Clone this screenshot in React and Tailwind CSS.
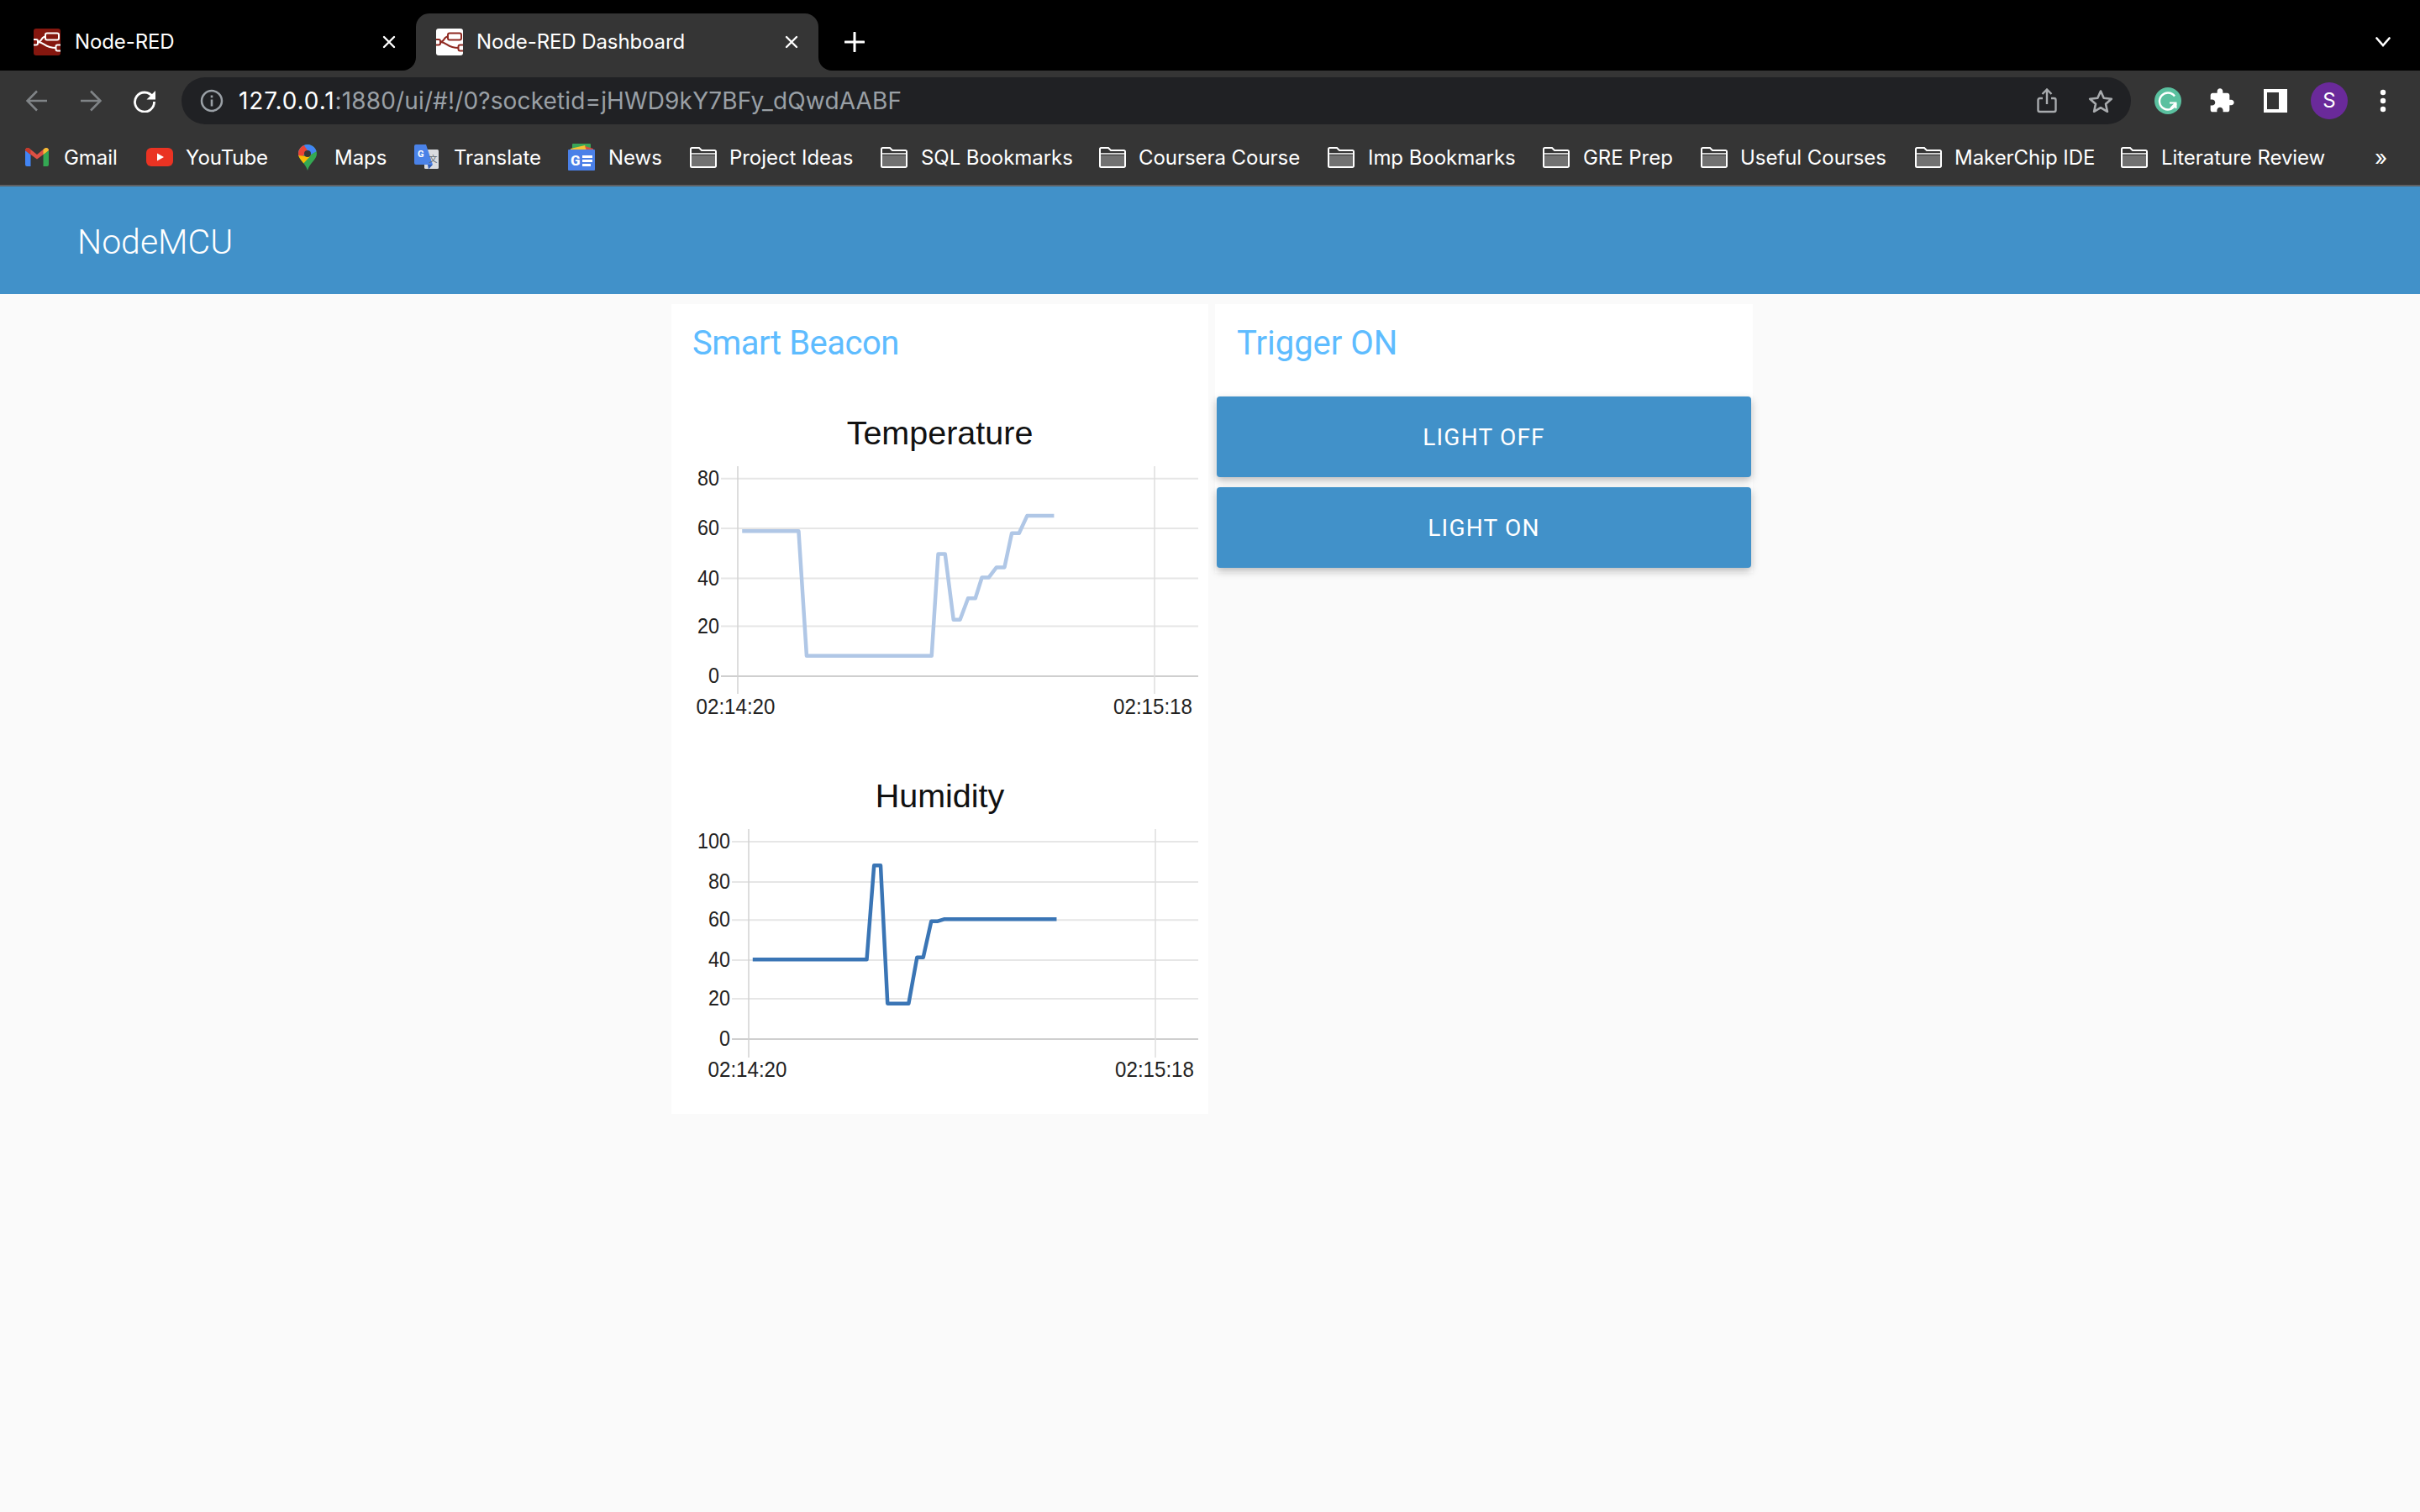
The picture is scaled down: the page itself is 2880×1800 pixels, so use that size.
import React from "react";

const Ui = "font-['Inter','Roboto',sans-serif]";

function NodeRedIcon({ bg, fg }) {
  return (
    <svg width="32" height="32" viewBox="0 0 32 32" className="shrink-0">
      <rect width="32" height="32" rx="3" fill={bg} />
      <g fill="none" stroke={fg} strokeWidth="2">
        <rect x="14" y="5.5" width="16" height="8" rx="2" />
        <rect x="26.5" y="19.5" width="8" height="7" rx="2" />
        <rect x="-3" y="13" width="8" height="6.5" rx="2" />
        <path d="M5 16 C10 16 9 9.5 14 9.5" />
        <path d="M5 16 C13 16 13 23 26.5 23" />
      </g>
    </svg>
  );
}

function X() {
  return (
    <svg width="16" height="16" viewBox="0 0 16 16">
      <path d="M2 2 L14 14 M14 2 L2 14" stroke="#fff" strokeWidth="2.4" strokeLinecap="round" />
    </svg>
  );
}

function Gmail() {
  return (
    <svg width="28" height="22" viewBox="0 0 28 22">
      <path d="M0 3 V20 a2 2 0 0 0 2 2 H6.5 V8 Z" fill="#4285f4" />
      <path d="M21.5 8 V22 H26 a2 2 0 0 0 2-2 V3 Z" fill="#34a853" />
      <path d="M0 3 a3 3 0 0 1 5-2.2 L14 8 L23 .8 a3 3 0 0 1 5 2.2 L21.5 8 L14 13.5 L6.5 8 Z" fill="#dd5044" />
      <path d="M0 3 a3 3 0 0 1 5-2.2 L6.5 2 V8 Z" fill="#c5392c" />
      <path d="M28 3 a3 3 0 0 0-5-2.2 L21.5 2 V8 Z" fill="#f2bd33" />
    </svg>
  );
}

function YouTube() {
  return (
    <svg width="32" height="22" viewBox="0 0 32 22">
      <rect width="32" height="22" rx="6" fill="#ea3323" />
      <path d="M13 6.5 L21 11 L13 15.5 Z" fill="#fff" />
    </svg>
  );
}

function Maps() {
  return (
    <svg width="22" height="31" viewBox="0 0 22 31">
      <defs>
        <clipPath id="pin">
          <path d="M11 0 C5 0 0 5 0 11 C0 18 8.500 22 11 31 C13.500 22 22 18 22 11 C22 5 17 0 11 0 Z" />
        </clipPath>
      </defs>
      <g clipPath="url(#pin)">
        <rect width="22" height="31" fill="#34a853" />
        <path d="M0 0 H22 V8 L13 13 H0 Z" fill="#4285f4" />
        <path d="M0 4 L6 0 L11 7 L4 16 L0 14 Z" fill="#ea4335" />
        <path d="M0 13 L8 14 L15 13 L3 26 L0 20 Z" fill="#fbbc04" />
      </g>
      <circle cx="11" cy="11" r="4" fill="#353535" />
    </svg>
  );
}

function Translate() {
  return (
    <svg width="30" height="30" viewBox="0 0 30 30">
      <rect x="12" y="6" width="17" height="23" rx="1.500" fill="#dadce0" />
      <path d="M2 0 H14 L22 24 H2 a2 2 0 0 1-2-2 V2 a2 2 0 0 1 2-2 Z" fill="#4a82e8" />
      <path d="M16 24 H22 L17 29.500 Z" fill="#2f5cb5" />
      <text x="4" y="15" fontSize="11" fontWeight="700" fill="#fff" fontFamily="Roboto, sans-serif">G</text>
      <text x="17.500" y="21" fontSize="10" fill="#5f6a73" fontFamily="'Noto Sans CJK SC', sans-serif">文</text>
    </svg>
  );
}

function News() {
  return (
    <svg width="32" height="32" viewBox="0 0 32 32">
      <rect x="5" y="0" width="22" height="6" rx="1" fill="#3aa757" />
      <path d="M3 6 L20 2 L24 8 H3 Z" fill="#f5c233" />
      <path d="M20 3 L30 6 V8 H22 Z" fill="#d9503f" />
      <rect y="7" width="32" height="25" rx="1" fill="#4a80e8" />
      <text x="3" y="26" fontSize="17" fontWeight="800" fill="#fff" fontFamily="Roboto, sans-serif">G</text>
      <rect x="17" y="14" width="12" height="3" fill="#fff" />
      <rect x="17" y="19" width="12" height="3" fill="#fff" />
      <rect x="17" y="24" width="10" height="3" fill="#fff" />
    </svg>
  );
}

function Folder() {
  return (
    <svg width="32" height="25" viewBox="0 0 32 25">
      <rect x="2" y="10" width="28" height="13" fill="#717171" />
      <path
        d="M2.500 1 H11 L14 4 H29.500 a1.500 1.500 0 0 1 1.500 1.500 V22.500 a1.500 1.500 0 0 1-1.500 1.500 H2.500 a1.500 1.500 0 0 1-1.500-1.500 V2.500 a1.500 1.500 0 0 1 1.500-1.500 Z"
        fill="none"
        stroke="#fff"
        strokeWidth="2"
      />
      <path d="M1 8 H31" stroke="#fff" strokeWidth="1.500" />
    </svg>
  );
}

const bookmarks = [
  { label: "Gmail", w: "w-[144px]", box: "w-[46px]", icon: <Gmail /> },
  { label: "YouTube", w: "w-[181px]", box: "w-[47px]", icon: <YouTube /> },
  { label: "Maps", w: "w-[138px]", box: "w-[43px]", icon: <Maps /> },
  { label: "Translate", w: "w-[183px]", box: "w-[47px]", icon: <Translate /> },
  { label: "News", w: "w-[145px]", box: "w-[48px]", icon: <News /> },
  { label: "Project Ideas", w: "w-[227px]", box: "w-[47px]", icon: <Folder /> },
  { label: "SQL Bookmarks", w: "w-[260px]", box: "w-[48px]", icon: <Folder /> },
  { label: "Coursera Course", w: "w-[272px]", box: "w-[47px]", icon: <Folder /> },
  { label: "Imp Bookmarks", w: "w-[256px]", box: "w-[48px]", icon: <Folder /> },
  { label: "GRE Prep", w: "w-[188px]", box: "w-[48px]", icon: <Folder /> },
  { label: "Useful Courses", w: "w-[255px]", box: "w-[47px]", icon: <Folder /> },
  { label: "MakerChip IDE", w: "w-[245px]", box: "w-[47px]", icon: <Folder /> },
  { label: "Literature Review", w: "w-[303px]", box: "w-[48px]", icon: <Folder /> },
];

function AxisText({ x, y, anchor, sx, children }) {
  return (
    <text
      transform={`translate(${x} ${y}) scale(${sx} 1)`}
      textAnchor={anchor}
      fontSize="26.5"
      fill="#222"
      fontFamily="'Liberation Sans', sans-serif"
    >
      {children}
    </text>
  );
}

function Chart({ rows, xL, xR, vL, vR, yTop, yBot, pts, color, time, right }) {
  const polyline = pts.map((p) => p.join(",")).join(" ");
  return (
    <svg width="639" height="320" viewBox="0 0 639 320" className="block -ml-px">
      {rows.map(([label, y], i) => (
        <g key={label}>
          <line x1={xL} x2="628" y1={y} y2={y} stroke={i === rows.length - 1 ? "#cfcfcf" : "#e6e6e6"} strokeWidth="2" />
          <AxisText x={right} y={y + 8} anchor="end" sx={0.88}>
            {label}
          </AxisText>
        </g>
      ))}
      <line x1={vL} x2={vL} y1={yTop} y2={yBot} stroke="#d2d2d2" strokeWidth="1.500" />
      <line x1={vR} x2={vR} y1={yTop} y2={yBot} stroke="#dedede" strokeWidth="1.500" />
      <polyline points={polyline} fill="none" stroke={color} strokeWidth="4.500" strokeLinejoin="round" />
      <AxisText x={xR[0]} y={time} anchor="middle" sx={0.91}>02:14:20</AxisText>
      <AxisText x={xR[1]} y={time} anchor="middle" sx={0.91}>02:15:18</AxisText>
    </svg>
  );
}

const tempPts = [
  [238, 849], [393, 849], [415, 1280], [758, 1280], [776, 928], [795, 928], [818, 1155], [836, 1155], [858, 1081],
  [878, 1081], [896, 1009], [915, 1009], [936, 974], [958, 974], [978, 856], [998, 856], [1020, 796], [1094, 796],
].map(([x, y]) => [x / 2.306 - 18, y / 2.904 - 204]);

const humPts = [
  [267, 787], [580, 787], [600, 451], [618, 451], [637, 944], [695, 944], [718, 779], [735, 779], [757, 650],
  [775, 650], [792, 643], [1101, 643],
].map(([x, y]) => [x / 2.306 - 18, y / 3 - 96]);

function Button({ children }) {
  return (
    <div className="h-[96px] pt-[1px] rounded-[4px] bg-[#4191c9] flex items-center justify-center text-white text-[28px] tracking-[1.2px] font-['Roboto',sans-serif] shadow-[0_4px_10px_rgba(0,0,0,0.28)]">
      {children}
    </div>
  );
}

export default function App() {
  return (
    <div className={`w-[2880px] h-[1800px] overflow-hidden flex flex-col bg-[#fafafa] ${Ui}`}>
      {/* Tab strip */}
      <div className="h-[84px] bg-black flex items-end text-white text-[24px]">
        <div className="w-[495px] h-[68px] flex items-center pl-[40px] pr-[24px]">
          <NodeRedIcon bg="#85170f" fg="#fff" />
          <span className="ml-[17px] flex-1 tracking-[-0.1px]">Node-RED</span>
          <X />
        </div>
        <div className="relative w-[479px] h-[68px] bg-[#353535] rounded-t-[16px] flex items-center pl-[24px] pr-[24px]">
          <div className="absolute left-[-16px] bottom-0 w-[16px] h-[16px] bg-[#353535]">
            <div className="w-full h-full bg-black rounded-br-[16px]" />
          </div>
          <div className="absolute right-[-16px] bottom-0 w-[16px] h-[16px] bg-[#353535]">
            <div className="w-full h-full bg-black rounded-bl-[16px]" />
          </div>
          <NodeRedIcon bg="#fff" fg="#8f2a22" />
          <span className="ml-[16px] flex-1 tracking-[-0.1px]">Node-RED Dashboard</span>
          <X />
        </div>
        <div className="h-[68px] flex items-center ml-[31px]">
          <svg width="24" height="24" viewBox="0 0 24 24">
            <path d="M12 1 V23 M1 12 H23" stroke="#fff" strokeWidth="3" strokeLinecap="round" />
          </svg>
        </div>
        <div className="h-[68px] flex items-center ml-auto mr-[35px]">
          <svg width="18" height="12" viewBox="0 0 18 12">
            <path d="M1.500 1.500 L9 10 L16.500 1.500" fill="none" stroke="#fff" strokeWidth="2.600" strokeLinecap="round" />
          </svg>
        </div>
      </div>

      {/* Toolbar */}
      <div className="h-[64px] bg-[#353535] flex pt-[8px] pl-[12px] pr-[12px]">
        <div className="w-[64px] h-[56px] flex items-center justify-center">
          <svg width="26" height="26" viewBox="0 0 26 26">
            <path d="M25 13 H2 M13 1.500 L1.500 13 L13 24.500" fill="none" stroke="#808487" strokeWidth="2.600" />
          </svg>
        </div>
        <div className="w-[64px] h-[56px] flex items-center justify-center">
          <svg width="26" height="26" viewBox="0 0 26 26">
            <path d="M1 13 H24 M13 1.500 L24.500 13 L13 24.500" fill="none" stroke="#808487" strokeWidth="2.600" />
          </svg>
        </div>
        <div className="w-[64px] h-[56px] flex items-center justify-center">
          <svg width="28" height="28" viewBox="0 0 28 28">
            <path d="M23.500 9 A11.500 11.500 0 1 0 25.500 15" fill="none" stroke="#fff" strokeWidth="2.800" />
            <path d="M27 2 V12.500 H16.500 Z" fill="#fff" />
          </svg>
        </div>
        <div className="flex-1 mx-[12px] h-[56px] rounded-full bg-[#202124] flex items-center pl-[16px] pr-[4px]">
          <div className="w-[40px] flex justify-center">
            <svg width="28" height="28" viewBox="0 0 28 28">
              <circle cx="14" cy="14" r="12" fill="none" stroke="#9aa0a6" strokeWidth="2.500" />
              <rect x="12.700" y="12.500" width="2.600" height="8" fill="#9aa0a6" />
              <rect x="12.700" y="7.500" width="2.600" height="2.800" fill="#9aa0a6" />
            </svg>
          </div>
          <div className="ml-[12px] flex-1 text-[28px] text-[#9aa0a6] tracking-[0.14px]">
            <span className="text-white tracking-[0.9px]">127.0.0.1</span>:1880/ui/#!/0?socketid=jHWD9kY7BFy_dQwdAABF
          </div>
          <div className="w-[64px] flex justify-center">
            <svg width="24" height="30" viewBox="0 0 24 30">
              <path d="M7 12 H3.500 a2 2 0 0 0-2 2 V26 a2 2 0 0 0 2 2 H20.500 a2 2 0 0 0 2-2 V14 a2 2 0 0 0-2-2 H17" fill="none" stroke="#a8abae" strokeWidth="2.400" />
              <path d="M12 19 V2 M6.500 7 L12 1.500 L17.500 7" fill="none" stroke="#a8abae" strokeWidth="2.400" />
            </svg>
          </div>
          <div className="w-[64px] flex justify-center">
            <svg width="30" height="28" viewBox="0 0 30 28">
              <path d="M15 2.500 L18.700 10.800 L27.800 11.700 L21 17.800 L22.900 26.800 L15 22.200 L7.100 26.800 L9 17.800 L2.200 11.700 L11.300 10.800 Z" fill="none" stroke="#a8abae" strokeWidth="2.600" strokeLinejoin="round" />
            </svg>
          </div>
        </div>
        <div className="w-[64px] h-[56px] flex items-center justify-center">
          <svg width="32" height="32" viewBox="0 0 32 32">
            <circle cx="16" cy="16" r="16" fill="#5ac09f" />
            <path d="M24 10.500 A10 10 0 1 0 25.500 19.500" fill="none" stroke="#fff" strokeWidth="2.400" />
            <path d="M18 18.500 H25.500 V25 M25.500 18.500 L19 25" fill="none" stroke="#fff" strokeWidth="2" />
          </svg>
        </div>
        <div className="w-[64px] h-[56px] flex items-center justify-center">
          <svg width="32" height="32" viewBox="0 0 24 24">
            <path
              fill="#fff"
              d="M20.500 11H19V7c0-1.100-.9-2-2-2h-4V3.500C13 2.120 11.880 1 10.500 1S8 2.120 8 3.500V5H4c-1.100 0-1.990.9-1.990 2v3.800H3.500c1.490 0 2.700 1.210 2.700 2.700s-1.210 2.700-2.700 2.700H2V20c0 1.100.9 2 2 2h3.800v-1.500c0-1.490 1.210-2.700 2.700-2.700 1.490 0 2.700 1.210 2.700 2.700V22H17c1.100 0 2-.9 2-2v-4h1.500c1.380 0 2.500-1.120 2.500-2.500S21.880 11 20.500 11z"
            />
          </svg>
        </div>
        <div className="w-[64px] h-[56px] flex items-center justify-center">
          <svg width="28" height="28" viewBox="0 0 28 28">
            <rect width="28" height="28" fill="#fff" />
            <rect x="4" y="4" width="14" height="20" fill="#353535" />
          </svg>
        </div>
        <div className="w-[64px] h-[56px] flex items-center justify-center">
          <div className="w-[44px] h-[44px] rounded-full bg-[#6a2a9a] flex items-center justify-center text-white text-[24px]">S</div>
        </div>
        <div className="w-[64px] h-[56px] flex items-center justify-center">
          <svg width="8" height="28" viewBox="0 0 8 28">
            <circle cx="4" cy="4" r="3.200" fill="#fff" />
            <circle cx="4" cy="14" r="3.200" fill="#fff" />
            <circle cx="4" cy="24" r="3.200" fill="#fff" />
          </svg>
        </div>
      </div>

      {/* Bookmarks */}
      <div className="h-[74px] bg-[#353535] border-b-2 border-[#5f6063] flex items-center pt-[6px] pl-[30px] text-white text-[24px] tracking-[-0.05px]">
        {bookmarks.map((b) => (
          <div key={b.label} className={`${b.w} flex items-center shrink-0`}>
            <div className={`${b.box} shrink-0 flex items-center`}>{b.icon}</div>
            <span className="whitespace-nowrap pt-[2px]">{b.label}</span>
          </div>
        ))}
        <span className="-ml-[1px] text-[26px]">»</span>
      </div>

      {/* Dashboard header */}
      <div className="h-[128px] bg-[#4191c9] flex items-center pl-[92px] pt-[6px] text-white text-[41px] font-light font-['Roboto',sans-serif]">
        NodeMCU
      </div>

      {/* Content */}
      <div className="flex items-start pl-[799px] pt-[12px] gap-[8px]">
        <div className="w-[639px] h-[964px] bg-white">
          <div className="h-[126px] pt-[17px] pl-[25px] text-[40px] leading-[60px] tracking-[-0.5px] text-[#5ebcff] font-['Roboto',sans-serif]">
            Smart Beacon
          </div>
          <div className="h-[56px] flex items-center justify-center text-[39.5px] text-[#111] font-['Liberation_Sans',sans-serif]">
            Temperature
          </div>
          <Chart
            rows={[["80", 25.7], ["60", 85], ["40", 144.5], ["20", 201.6], ["0", 261]]}
            xL={60}
            right={58}
            vL={80}
            vR={576}
            yTop={11}
            yBot={282}
            pts={tempPts}
            color="#b0c7e6"
            xR={[77.5, 574]}
            time={305.5}
          />
          <div className="mt-[56px] h-[56px] flex items-center justify-center text-[39.5px] text-[#111] font-['Liberation_Sans',sans-serif]">
            Humidity
          </div>
          <Chart
            rows={[["100", 26], ["80", 74], ["60", 119.3], ["40", 167], ["20", 213], ["0", 261]]}
            xL={73}
            right={71}
            vL={93}
            vR={577}
            yTop={11}
            yBot={283}
            pts={humPts}
            color="#3a75b5"
            xR={[91.5, 576]}
            time={305.5}
          />
        </div>
        <div className="w-[640px] h-[320px] bg-white flex flex-col">
          <div className="h-[110px] pt-[17px] pl-[26px] text-[40px] leading-[60px] text-[#5ebcff] font-['Roboto',sans-serif]">
            Trigger ON
          </div>
          <div className="px-[2px] flex flex-col gap-[12px]">
            <Button>LIGHT OFF</Button>
            <Button>LIGHT ON</Button>
          </div>
        </div>
      </div>
    </div>
  );
}
